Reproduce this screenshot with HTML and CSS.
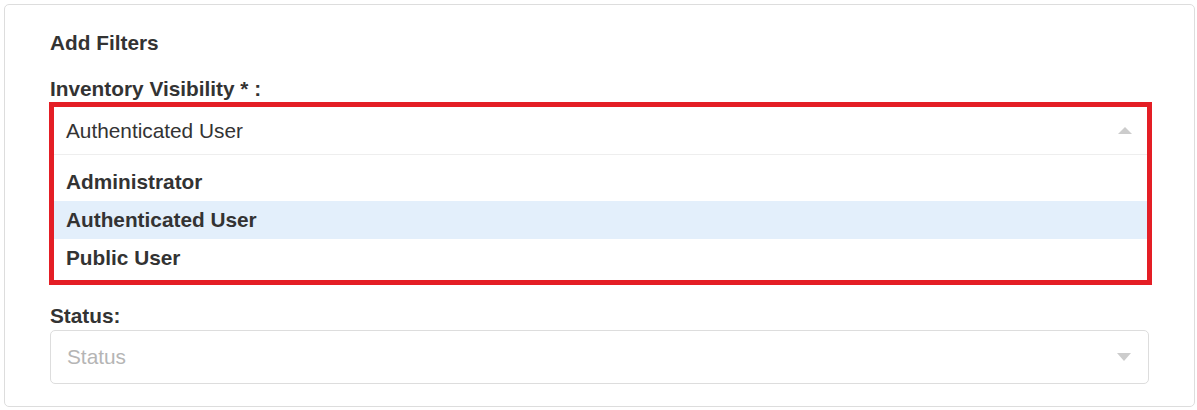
FILE: index.html
```html
<!DOCTYPE html>
<html lang="en">
<head>
    <meta charset="UTF-8">
    <meta name="viewport" content="width=device-width, initial-scale=1.0">
    <title>Add Filters</title>
    <link rel="stylesheet" href="styles.css">
</head>
<body>
    <div class="filter-card">
        <h3 class="filter-title">Add Filters</h3>

        <div class="form-group">
            <label class="field-label">Inventory Visibility * :</label>
            <div class="highlight-box">
                <div class="select-control open">
                    <span class="select-value">Authenticated User</span>
                    <span class="select-arrow up"></span>
                </div>
                <ul class="select-menu">
                    <li>Administrator</li>
                    <li class="active">Authenticated User</li>
                    <li>Public User</li>
                </ul>
            </div>
        </div>

        <div class="form-group status-group">
            <label class="field-label">Status:</label>
            <div class="select-control bordered">
                <span class="select-placeholder">Status</span>
                <span class="select-arrow down"></span>
            </div>
        </div>
    </div>
</body>
</html>
```

FILE: styles.css
```css
body {
    font-family: "Liberation Sans", Arial, sans-serif;
    font-size: 20.8px;
    color: #333;
    background-color: #fff;
    margin: 0;
    padding: 4px 2px 0 4px;
}

.filter-card {
    width: 1191px;
    border: 1px solid #ddd;
    border-radius: 5px;
    padding: 25px 45px 22px 45px;
    box-sizing: border-box;
}

.filter-title {
    margin: 0 0 21px 0;
    font-size: 20.8px;
    line-height: 25px;
    font-weight: bold;
}

.field-label {
    display: block;
    font-weight: bold;
    line-height: 25px;
    margin-bottom: 1px;
}

.status-group {
    margin-top: 18px;
}

.status-group .field-label {
    margin-bottom: 2px;
}

.highlight-box {
    border: 5px solid #e41e25;
    margin-left: -1px;
    width: 1103px;
    box-sizing: border-box;
}

.select-control {
    display: flex;
    align-items: center;
    justify-content: space-between;
    padding: 0 15px 0 12px;
    height: 48px;
    box-sizing: border-box;
}

.select-control.open {
    border-bottom: 1px solid #eee;
}

.select-control.bordered {
    height: 54px;
    border: 1px solid #ddd;
    border-radius: 5px;
    padding-left: 16px;
    padding-right: 17px;
}

.select-placeholder {
    color: #b5b5b5;
}

.select-arrow {
    width: 0;
    height: 0;
    border-left: 7px solid transparent;
    border-right: 7px solid transparent;
}

.select-arrow.up {
    border-bottom: 7px solid #ccc;
}

.select-arrow.down {
    border-top: 8px solid #ccc;
}

.select-menu {
    list-style: none;
    margin: 0;
    padding: 8px 0 3px 0;
}

.select-menu li {
    height: 38px;
    line-height: 38px;
    padding-left: 12px;
    font-weight: bold;
}

.select-menu li.active {
    background-color: #e3effb;
}
```
